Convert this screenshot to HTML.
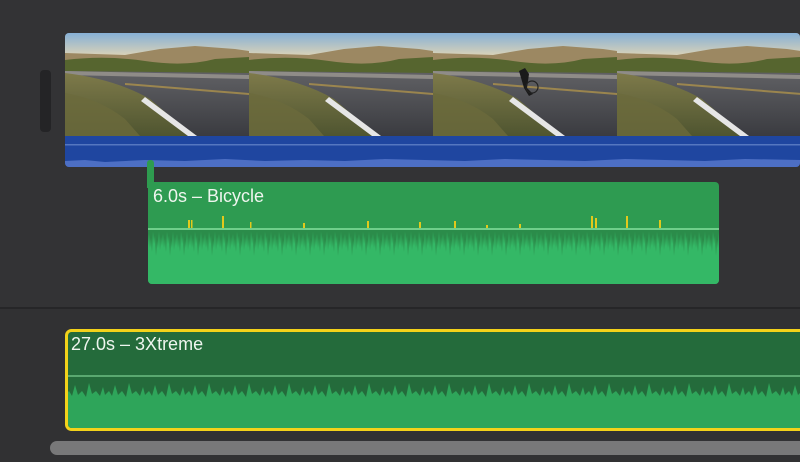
<!DOCTYPE html>
<html><head><meta charset="utf-8"><style>
body{margin:0;width:800px;height:462px;overflow:hidden;background:#333335;font-family:"Liberation Sans",sans-serif;position:relative}
.a{position:absolute}
</style></head><body>
<div class="a" style="left:40px;top:70px;width:11px;height:62px;background:#242426;border-radius:4px"></div>
<div class="a" style="left:0;top:307px;width:800px;height:2px;background:#262628"></div>
<div class="a" style="left:0;top:309px;width:800px;height:153px;background:#313133"></div>

<svg class="a" style="left:65px;top:33px" width="735" height="135">
<defs>
<linearGradient id="sky" x1="0" y1="0" x2="0" y2="1"><stop offset="0" stop-color="#86b0d6"/><stop offset="1" stop-color="#e6d7b3"/></linearGradient>
<linearGradient id="road" x1="0" y1="0" x2="0" y2="1"><stop offset="0" stop-color="#77777a"/><stop offset="1" stop-color="#3a3b40"/></linearGradient>
<linearGradient id="gr" x1="0" y1="0" x2="0" y2="1"><stop offset="0" stop-color="#7e7a4a"/><stop offset="1" stop-color="#4f5530"/></linearGradient>
<clipPath id="c"><rect x="0" y="0" width="735" height="134" rx="4"/></clipPath>
<g id="f">
<rect width="184" height="103" fill="url(#road)"/>
<rect width="184" height="26" fill="url(#sky)"/>
<path d="M0 20 L60 22 L95 16 L130 13 L170 16 L184 18 L184 32 L0 32Z" fill="#9c8862"/>
<path d="M0 27 Q40 22 80 28 T150 26 L184 24 L184 40 L0 38Z" fill="#56652f"/>
<path d="M0 38 L184 42 L184 46 L0 42Z" fill="#8f8c88"/>
<path d="M60 50 L184 60 L184 62 L60 52Z" fill="#b99a4a" opacity=".7"/>
<path d="M0 40 Q50 46 85 66 L128 103 L0 103Z" fill="url(#gr)"/>
<path d="M0 60 Q35 66 60 86 L75 103 L0 103Z" fill="#6b6a3c" opacity=".8"/>
<path d="M80 64 L132 103 L123 103 L76 68Z" fill="#e6e6e6"/>
</g>
</defs>
<g clip-path="url(#c)">
<use href="#f" x="0"/><use href="#f" x="184"/><use href="#f" x="368"/><use href="#f" x="552"/>
<path d="M454 38 l6 -3 l4 6 l-2 14 l6 6 l-4 2 l-5 -8z" fill="#1a1a1a"/>
<circle cx="467" cy="54" r="6" fill="none" stroke="#222" stroke-width="1.2"/>
<rect x="0" y="103" width="735" height="32" fill="#1f46a0"/>
<rect x="0" y="111" width="735" height="1.5" fill="#5577c0"/>
<path d="M0 134 L0 128 L20 127 L40 129 L80 127 L120 128 L160 126 L200 128 L240 127 L280 128 L320 126 L360 127 L400 128 L440 126 L480 127 L520 128 L560 126 L600 127 L640 128 L680 126 L735 127 L735 134Z" fill="#4d6fc4"/>
</g>
</svg>

<div class="a" style="left:147px;top:160px;width:7px;height:28px;background:#2e9b4f;border-radius:3px 3px 0 0"></div>
<svg class="a" style="left:148px;top:182px" width="571" height="102">
<defs>
<pattern id="w1" x="0" y="48" width="14" height="60" patternUnits="userSpaceOnUse">
<path d="M0 16 L1 4 L2 18 L3 8 L4 22 L5 2 L6 14 L7 6 L8 26 L9 10 L10 18 L11 2 L12 20 L13 7 L14 16 L14 60 L0 60Z" fill="#34b866"/>
</pattern>
<clipPath id="c2"><rect width="571" height="102" rx="4"/></clipPath>
</defs>
<g clip-path="url(#c2)">
<rect width="571" height="102" fill="#2e9b51"/>
<rect y="48" width="571" height="60" fill="#2b8c4a"/>
<rect y="48" width="571" height="60" fill="url(#w1)"/>
<rect y="46" width="571" height="2" fill="#6fcf8a"/>
<g fill="#e2c91c">
<rect x="40" y="38" width="2" height="8"/><rect x="43" y="38" width="1.5" height="8"/><rect x="74" y="34" width="2" height="12"/><rect x="102" y="40" width="1.5" height="6"/><rect x="155" y="41" width="2" height="5"/><rect x="219" y="39" width="2" height="7"/><rect x="271" y="40" width="2" height="6"/><rect x="306" y="39" width="2" height="7"/><rect x="338" y="43" width="2" height="3"/><rect x="371" y="42" width="2" height="4"/><rect x="443" y="34" width="2" height="12"/><rect x="447" y="36" width="2" height="10"/><rect x="478" y="34" width="2" height="12"/><rect x="511" y="38" width="2" height="8"/>
</g>
</g>
<text x="5" y="20" fill="#eef5ee" font-size="18" font-family="Liberation Sans,sans-serif">6.0s – Bicycle</text>
</svg>

<svg class="a" style="left:65px;top:329px" width="735" height="102">
<defs>
<pattern id="w2" x="0" y="50" width="40" height="60" patternUnits="userSpaceOnUse">
<path d="M0 16 L4 12 L7 17 L10 6 L13 16 L17 12 L21 18 L24 4 L27 15 L31 12 L35 17 L38 8 L40 16 L40 60 L0 60Z" fill="#2ea55a"/>
</pattern>
<clipPath id="c3"><rect x="3" y="3" width="740" height="96" rx="4"/></clipPath>
</defs>
<rect x="1.5" y="1.5" width="740" height="99" rx="5" fill="#246b3b" stroke="#f3d21a" stroke-width="3"/>
<g clip-path="url(#c3)">
<rect x="3" y="50" width="732" height="50" fill="url(#w2)"/>
<rect x="3" y="46" width="732" height="2" fill="#5aa870"/>
</g>
<text x="6" y="21" fill="#eef5ee" font-size="18" font-family="Liberation Sans,sans-serif">27.0s – 3Xtreme</text>
</svg>

<div class="a" style="left:50px;top:441px;width:760px;height:14px;background:#787879;border-radius:7px"></div>
</body></html>
